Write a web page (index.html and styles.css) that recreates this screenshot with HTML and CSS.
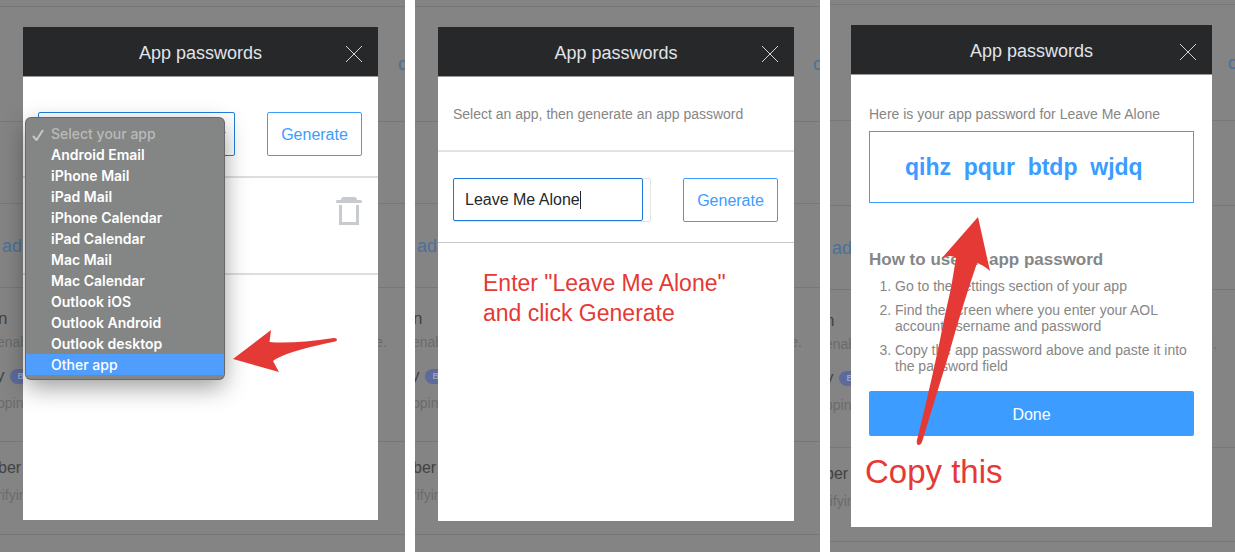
FILE: index.html
```html
<!DOCTYPE html>
<html lang="en">
<head>
<meta charset="utf-8">
<title>App passwords</title>
<link rel="stylesheet" href="styles.css">
</head>
<body>
<main class="steps">

  <section class="panel">
    <div class="page" aria-hidden="true">
      <div class="row"></div>
      <div class="row row-end"><span class="link">c</span></div>
      <div class="row"></div>
      <div class="row row-link"><span class="link">add</span></div>
      <div class="row row-options">
        <div class="title">n</div>
        <div class="sub"><span>enab</span><span>e.</span></div>
        <div class="title title-badge">y <span class="badge">BETA</span></div>
        <div class="sub">pping</div>
      </div>
      <div class="row row-number">
        <div class="title">ber</div>
        <div class="sub">rifyin</div>
      </div>
      <div class="row"></div>
    </div>
    <div class="modal">
      <header class="modal-head">
        <h2>App passwords</h2>
        <button class="close" type="button" aria-label="Close"><svg viewBox="0 0 16 16"><path d="M0 0L16 16M16 0L0 16"/></svg></button>
      </header>
      <form class="app-row app-row-first">
        <div class="select-field"><select aria-label="App"><option>Select your app</option></select></div>
        <button class="btn" type="button">Generate</button>
      </form>
      <div class="saved-row">
        <button class="trash" type="button" aria-label="Delete"><svg viewBox="0 0 26 28"><path d="M5 3Q5 0 8 0H18Q21 0 21 3H25Q26 3 26 4.500Q26 6 25 6H1Q0 6 0 4.500Q0 3 1 3ZM3 8H6V25H20V8H23V28H3Z"/></svg></button>
      </div>
      <ul class="menu" role="listbox" aria-label="Select your app">
        <li class="placeholder" role="option" aria-selected="true"><svg viewBox="0 0 12 12"><path d="M1 7L4.500 11L11 1"/></svg>Select your app</li>
        <li role="option">Android Email</li>
        <li role="option">iPhone Mail</li>
        <li role="option">iPad Mail</li>
        <li role="option">iPhone Calendar</li>
        <li role="option">iPad Calendar</li>
        <li role="option">Mac Mail</li>
        <li role="option">Mac Calendar</li>
        <li role="option">Outlook iOS</li>
        <li role="option">Outlook Android</li>
        <li role="option">Outlook desktop</li>
        <li class="active" role="option">Other app</li>
      </ul>
      <svg class="arrow arrow-left" viewBox="0 0 104 42" aria-hidden="true"><path d="M0 29L38 0L36.500 12Q60 14 101 8Q104 8 104 10Q103.500 11 102 11.500Q51 22 40 31L46 42Z"/></svg>
    </div>
  </section>

  <section class="panel panel-name">
    <div class="page" aria-hidden="true">
      <div class="row"></div>
      <div class="row row-end"><span class="link">c</span></div>
      <div class="row"></div>
      <div class="row row-link"><span class="link">add</span></div>
      <div class="row row-options">
        <div class="title">n</div>
        <div class="sub"><span>enab</span><span>e.</span></div>
        <div class="title title-badge">y <span class="badge">BETA</span></div>
        <div class="sub">pping</div>
      </div>
      <div class="row row-number">
        <div class="title">ber</div>
        <div class="sub">rifyin</div>
      </div>
      <div class="row"></div>
    </div>
    <div class="modal">
      <header class="modal-head">
        <h2>App passwords</h2>
        <button class="close" type="button" aria-label="Close"><svg viewBox="0 0 16 16"><path d="M0 0L16 16M16 0L0 16"/></svg></button>
      </header>
      <p class="intro">Select an app, then generate an app password</p>
      <form class="app-row">
        <div class="name-field"><input type="text" value="Leave Me Alone" aria-label="App name"><span class="caret"></span></div>
        <button class="btn" type="button">Generate</button>
      </form>
      <p class="note">Enter "Leave Me Alone"<br>and click Generate</p>
    </div>
  </section>

  <section class="panel panel-result">
    <div class="page" aria-hidden="true">
      <div class="row"></div>
      <div class="row row-end"><span class="link">c</span></div>
      <div class="row"></div>
      <div class="row row-link"><span class="link">add</span></div>
      <div class="row row-options">
        <div class="title">n</div>
        <div class="sub"><span>enab</span><span>e.</span></div>
        <div class="title title-badge">y <span class="badge">BETA</span></div>
        <div class="sub">pping</div>
      </div>
      <div class="row row-number">
        <div class="title">ber</div>
        <div class="sub">rifyin</div>
      </div>
      <div class="row"></div>
    </div>
    <div class="modal">
      <header class="modal-head">
        <h2>App passwords</h2>
        <button class="close" type="button" aria-label="Close"><svg viewBox="0 0 16 16"><path d="M0 0L16 16M16 0L0 16"/></svg></button>
      </header>
      <div class="result">
        <p class="result-label">Here is your app password for Leave Me Alone</p>
        <div class="password">qihz  pqur  btdp  wjdq</div>
        <h3>How to use an app password</h3>
        <ol class="instructions">
          <li>Go to the settings section of your app</li>
          <li>Find the screen where you enter your AOL account username and password</li>
          <li>Copy the app password above and paste it into the password field</li>
        </ol>
        <button class="done" type="button">Done</button>
        <p class="copy-note">Copy this</p>
      </div>
      <svg class="arrow arrow-up" viewBox="0 0 74 229" aria-hidden="true"><path d="M62 0L26 41Q36 37 40 41Q36 70 29 98Q18 155 1 223Q0 228 3 228Q5 228 6 225Q20 179 32 140Q46 90 61 46Q66 47 74 54Z"/></svg>
    </div>
  </section>

</main>
</body>
</html>
```
FILE: styles.css
```css
* { box-sizing: border-box; }

body {
  margin: 0;
  background: #fff;
  color: #868686;
  font: 14px/16px "Liberation Sans", Arial, sans-serif;
}

h2, h3, p, ul, ol { margin: 0; padding: 0; }

button, input, select { font-family: inherit; margin: 0; }

/* Three screens side by side */
.steps {
  display: grid;
  grid-template-columns: repeat(3, minmax(0, 1fr));
  gap: 10px;
  min-height: 100vh;
}

.panel {
  display: grid;
  grid-template: 1fr / minmax(0, 1fr);
  overflow: hidden;
  background: #848484;
}

.page, .modal { grid-area: 1 / 1; }

/* Dimmed account page */
.page {
  display: grid;
  grid-template-rows: 7px 115px 82px 84px 154px 93px 1fr;
}

.row { border-bottom: 1px solid #777; }
.row:last-child { border-bottom: 0; }

.row-end {
  display: flex;
  align-items: center;
  justify-content: flex-end;
}

.row-end .link { margin-right: -2px; }

.row-link {
  display: flex;
  align-items: center;
  padding-left: 2px;
}

.link { color: #4b7198; font-size: 18px; line-height: 20px; }
.row-options { padding-top: 19px; }
.row-number { padding-top: 14px; }

.title {
  margin-left: -2px;
  color: #424242;
  font-size: 17px;
  line-height: 24px;
}

.row-number .title { font-size: 16px; }

.title-badge {
  display: flex;
  align-items: center;
  gap: 5px;
  margin-left: -4px;
  padding: 11px 0 4px;
}

.badge {
  padding: 0 8px;
  border-radius: 8px;
  background: #5d6a9c;
  color: #9aa2bf;
  font-size: 9px;
  font-weight: bold;
  line-height: 15px;
}

.sub {
  display: flex;
  justify-content: space-between;
  margin: 0 18px 0 -3px;
  color: #6b6b6b;
  line-height: 22px;
}

.row-number .sub { margin-top: 4px; }

/* Dialog */
.modal {
  position: relative;
  display: flex;
  flex-direction: column;
  margin: 27px 27px 32px 23px;
  background: #fff;
}

.modal-head {
  display: grid;
  grid-template-columns: 32px 1fr 32px;
  align-items: center;
  min-height: 50px;
  padding-bottom: 1px;
  border-bottom: 1px solid #999;
  background: #26282a;
}

.modal-head h2 {
  grid-column: 2;
  padding-top: 4px;
  color: #e0e4e9;
  font-size: 18px;
  font-weight: normal;
  line-height: 24px;
  text-align: center;
}

.close {
  width: 16px;
  height: 22px;
  padding: 6px 0 0;
  border: 0;
  background: none;
}

.close svg { display: block; width: 16px; height: 16px; overflow: visible; fill: none; stroke: #d0d2d4; }

.app-row {
  display: flex;
  align-items: flex-start;
  justify-content: space-between;
  gap: 32px;
  padding: 26px 16px 20px 15px;
  border-bottom: 1px solid #c8c8c8;
}

.app-row-first { padding-top: 35px; border-bottom: 2px solid #dedede; }

.select-field { position: relative; flex: 1; min-width: 0; }

.select-field select {
  display: block;
  width: 100%;
  height: 44px;
  padding: 0 10px;
  border: 1px solid #1f7fe0;
  border-radius: 2px;
  background: #fff;
  color: #26282a;
  font-size: 16px;
  appearance: none;
}

.select-field::after {
  content: "";
  position: absolute;
  top: 20px;
  right: 9px;
  border: 5px solid transparent;
  border-top-color: #444;
}

.btn {
  flex: none;
  width: 95px;
  height: 44px;
  padding: 2px 0 0;
  border: 1px solid #3c9cff;
  border-radius: 2px;
  background: #fff;
  color: #3c9cff;
  font-size: 16px;
}

.saved-row {
  display: flex;
  justify-content: flex-end;
  min-height: 97px;
  padding: 19px 16px;
  border-bottom: 2px solid #dedede;
}

.trash { width: 26px; height: 28px; padding: 0; border: 0; background: none; }
.trash svg { display: block; width: 26px; height: 28px; fill: #c7cbd0; }

.menu {
  position: absolute;
  top: 91px;
  left: 3px;
  width: 198px;
  padding: 5px 0 4px;
  border-radius: 5px;
  background: #848585;
  box-shadow: 0 0 0 1px #686868, 0 8px 24px rgba(0, 0, 0, .4);
  color: #fff;
  font: 600 14px/21px Inter, sans-serif;
  list-style: none;
}

.menu li { position: relative; padding-left: 25px; }
.menu .placeholder { color: #b9baba; font-weight: 500; }
.menu .placeholder svg { position: absolute; top: 6px; left: 6px; width: 12px; height: 12px; fill: none; stroke: #c8c8c8; stroke-width: 2; }
.menu .active { background: #4f9dfc; font-weight: 500; }

.intro {
  padding: 29px 15px 28px;
  border-bottom: 2px solid #e2e2e2;
}

.panel-name .modal { margin: 27px 26px 31px 23px; }

.name-field {
  position: relative;
  flex: 1;
  height: 44px;
  padding-right: 8px;
  border-radius: 2px;
  box-shadow: inset 0 0 0 1px #e4e4e4;
}

.name-field input {
  width: 100%;
  height: 43px;
  padding: 0 11px;
  border: 1px solid #1f78d8;
  border-radius: 2px;
  background: #fff;
  color: #26282a;
  font-size: 16px;
}

.caret { position: absolute; top: 13px; left: 127px; width: 1px; height: 18px; background: #26282a; }

.note {
  padding: 25px 45px;
  color: #e53935;
  font-size: 23px;
  line-height: 30px;
}

/* Generated password */
.panel-result .page { grid-template-rows: 5px 116px 85px 84px 158px 94px 1fr; }
.panel-result .modal { margin: 25px 23px 25px 21px; }
.panel-result .title, .panel-result .sub { margin-left: -5px; }
.result { padding: 31px 18px; }

.password {
  margin: 9px 0 48px;
  padding: 20px 0 20px 35px;
  border: 1px solid #3c9cff;
  color: #3c9cff;
  font-size: 23px;
  font-weight: bold;
  line-height: 30px;
  white-space: pre;
}

.result h3 { font-size: 17px; line-height: 18px; }

.instructions {
  display: grid;
  gap: 8px;
  margin: 9px 0 17px;
  padding-left: 26px;
}

.done {
  display: block;
  width: 100%;
  height: 45px;
  padding: 2px 0 0;
  border: 0;
  border-radius: 2px;
  background: #3c9cff;
  color: #fff;
  font-size: 16px;
}

.copy-note {
  margin: 16px 0 0 -4px;
  color: #e53935;
  font-size: 33px;
  line-height: 40px;
}

/* Hand-placed pointers */
.arrow { position: absolute; fill: #e53935; }
.arrow-left { top: 303px; left: 210px; width: 104px; height: 42px; }
.arrow-up { top: 192px; left: 65px; width: 74px; height: 229px; }
```
